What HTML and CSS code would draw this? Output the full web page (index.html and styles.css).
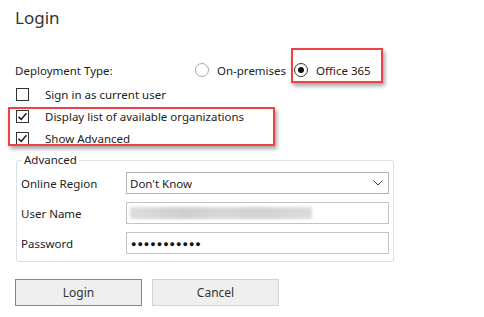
FILE: index.html
```html
<!DOCTYPE html>
<html lang="en">
    <head>
        <meta charset="UTF-8">
        <meta name="viewport" content="width=device-width, initial-scale=1.0">
        <title>Login</title>
        <link rel="stylesheet" href="styles.css">
    </head>
    <body>
        <div class="dialog">
            <h1 class="titulo">Login</h1>

            <div class="linha-tipo">
                <span class="rotulo-tipo">Deployment Type:</span>
                <div class="opcoes">
                    <label class="opcao"><span class="radio"></span>On-premises</label>
                    <label class="opcao"><span class="radio marcado"></span>Office 365</label>
                </div>
            </div>

            <div class="caixas">
                <label class="caixa-linha"><span class="caixa"></span>Sign in as current user</label>
                <label class="caixa-linha"><span class="caixa"><svg viewBox="0 0 13 13" width="13" height="13"><path d="M2.5 6.8 L5.2 9.4 L10.4 3.2" fill="none" stroke="#222" stroke-width="1.6"/></svg></span>Display list of available organizations</label>
                <label class="caixa-linha"><span class="caixa"><svg viewBox="0 0 13 13" width="13" height="13"><path d="M2.5 6.8 L5.2 9.4 L10.4 3.2" fill="none" stroke="#222" stroke-width="1.6"/></svg></span>Show Advanced</label>
            </div>

            <fieldset class="grupo">
                <legend>Advanced</legend>
                <div class="campos">
                    <span class="rotulo">Online Region</span>
                    <div class="campo selecao">
                        <span>Don't Know</span>
                        <svg viewBox="0 0 10 6" width="10" height="6"><path d="M0.5 0.5 L5 5 L9.5 0.5" fill="none" stroke="#444" stroke-width="1"/></svg>
                    </div>
                    <span class="rotulo">User Name</span>
                    <div class="campo"><span class="borrado"></span></div>
                    <span class="rotulo">Password</span>
                    <div class="campo"><span class="senha">●●●●●●●●●●●</span></div>
                </div>
            </fieldset>

            <div class="menu">
                <button class="botoes foco">Login</button>
                <button class="botoes">Cancel</button>
            </div>

            <div class="destaque destaque-office"></div>
            <div class="destaque destaque-opcoes"></div>
        </div>
    </body>
</html>
```

FILE: styles.css
```css
body {
    margin: 0;
    padding: 0;
    background: #fff;
    color: #222;
    font-family: 'Noto Sans', 'Open Sans', sans-serif;
    font-size: 11.5px;
}

.dialog {
    position: relative;
    width: 484px;
    height: 317px;
    padding: 6px 0 0 15px;
    box-sizing: border-box;
}

.titulo {
    margin: 0;
    font-size: 17px;
    font-weight: 400;
    line-height: 24px;
    color: #333;
}

.linha-tipo {
    display: flex;
    align-items: center;
    height: 20px;
    margin-top: 30px;
}

.rotulo-tipo {
    width: 180px;
}

.opcoes {
    display: flex;
    gap: 8px;
}

.opcao {
    display: flex;
    align-items: center;
    gap: 8px;
}

.radio {
    width: 14px;
    height: 14px;
    border: 1px solid #a8a8a8;
    border-radius: 50%;
    box-sizing: border-box;
    display: flex;
    align-items: center;
    justify-content: center;
}

.radio.marcado {
    border-color: #333;
}

.radio.marcado::after {
    content: "";
    width: 6px;
    height: 6px;
    border-radius: 50%;
    background: #111;
}

.caixas {
    margin-top: 3px;
}

.caixa-linha {
    display: flex;
    align-items: center;
    height: 22px;
    padding-left: 1px;
}

.caixa {
    width: 13px;
    height: 13px;
    border: 1px solid #333;
    box-sizing: border-box;
    margin-right: 16px;
    display: flex;
    align-items: center;
    justify-content: center;
}

.caixa svg {
    flex: none;
}

.grupo {
    margin: 4px 0 0 1px;
    width: 378px;
    box-sizing: border-box;
    border: 1px solid #d9e0e6;
    border-radius: 3px;
    padding: 5px 3px 7px 4px;
}

.grupo legend {
    padding: 0 2px;
    margin-left: 1px;
    line-height: 14px;
}

.campos {
    display: grid;
    grid-template-columns: 105px 263px;
    grid-auto-rows: 22px;
    row-gap: 8px;
    align-items: center;
}

.campo {
    height: 22px;
    border: 1px solid #c4c4c4;
    box-sizing: border-box;
    display: flex;
    align-items: center;
    padding: 0 6px 0 3px;
}

.selecao {
    border-color: #b4b4b4;
    justify-content: space-between;
    padding-right: 5px;
}

.borrado {
    width: 182px;
    height: 12px;
    background: linear-gradient(90deg, #ddd, #cfcfcf 30%, #d8d8d8 50%, #d2d2d2 70%, #dcdcdc);
    filter: blur(1.5px);
}

.senha {
    font-size: 9px;
    letter-spacing: 1px;
    padding-left: 1px;
    color: #111;
}

.menu {
    display: flex;
    gap: 10px;
    margin-top: 17px;
}

.botoes {
    width: 127px;
    height: 27px;
    background: #efefef;
    border: 1px solid #d2d2d2;
    font-family: inherit;
    font-size: 12px;
    color: #333;
    padding: 0;
}

.botoes.foco {
    border-color: #3d95ee;
}

.destaque {
    position: absolute;
    border: 2px solid #ef4146;
    box-shadow: 2px 3px 4px rgba(0, 0, 0, 0.35);
}

.destaque-office {
    left: 291px;
    top: 48px;
    width: 88px;
    height: 31px;
}

.destaque-opcoes {
    left: 8px;
    top: 107px;
    width: 263px;
    height: 35px;
}
```
